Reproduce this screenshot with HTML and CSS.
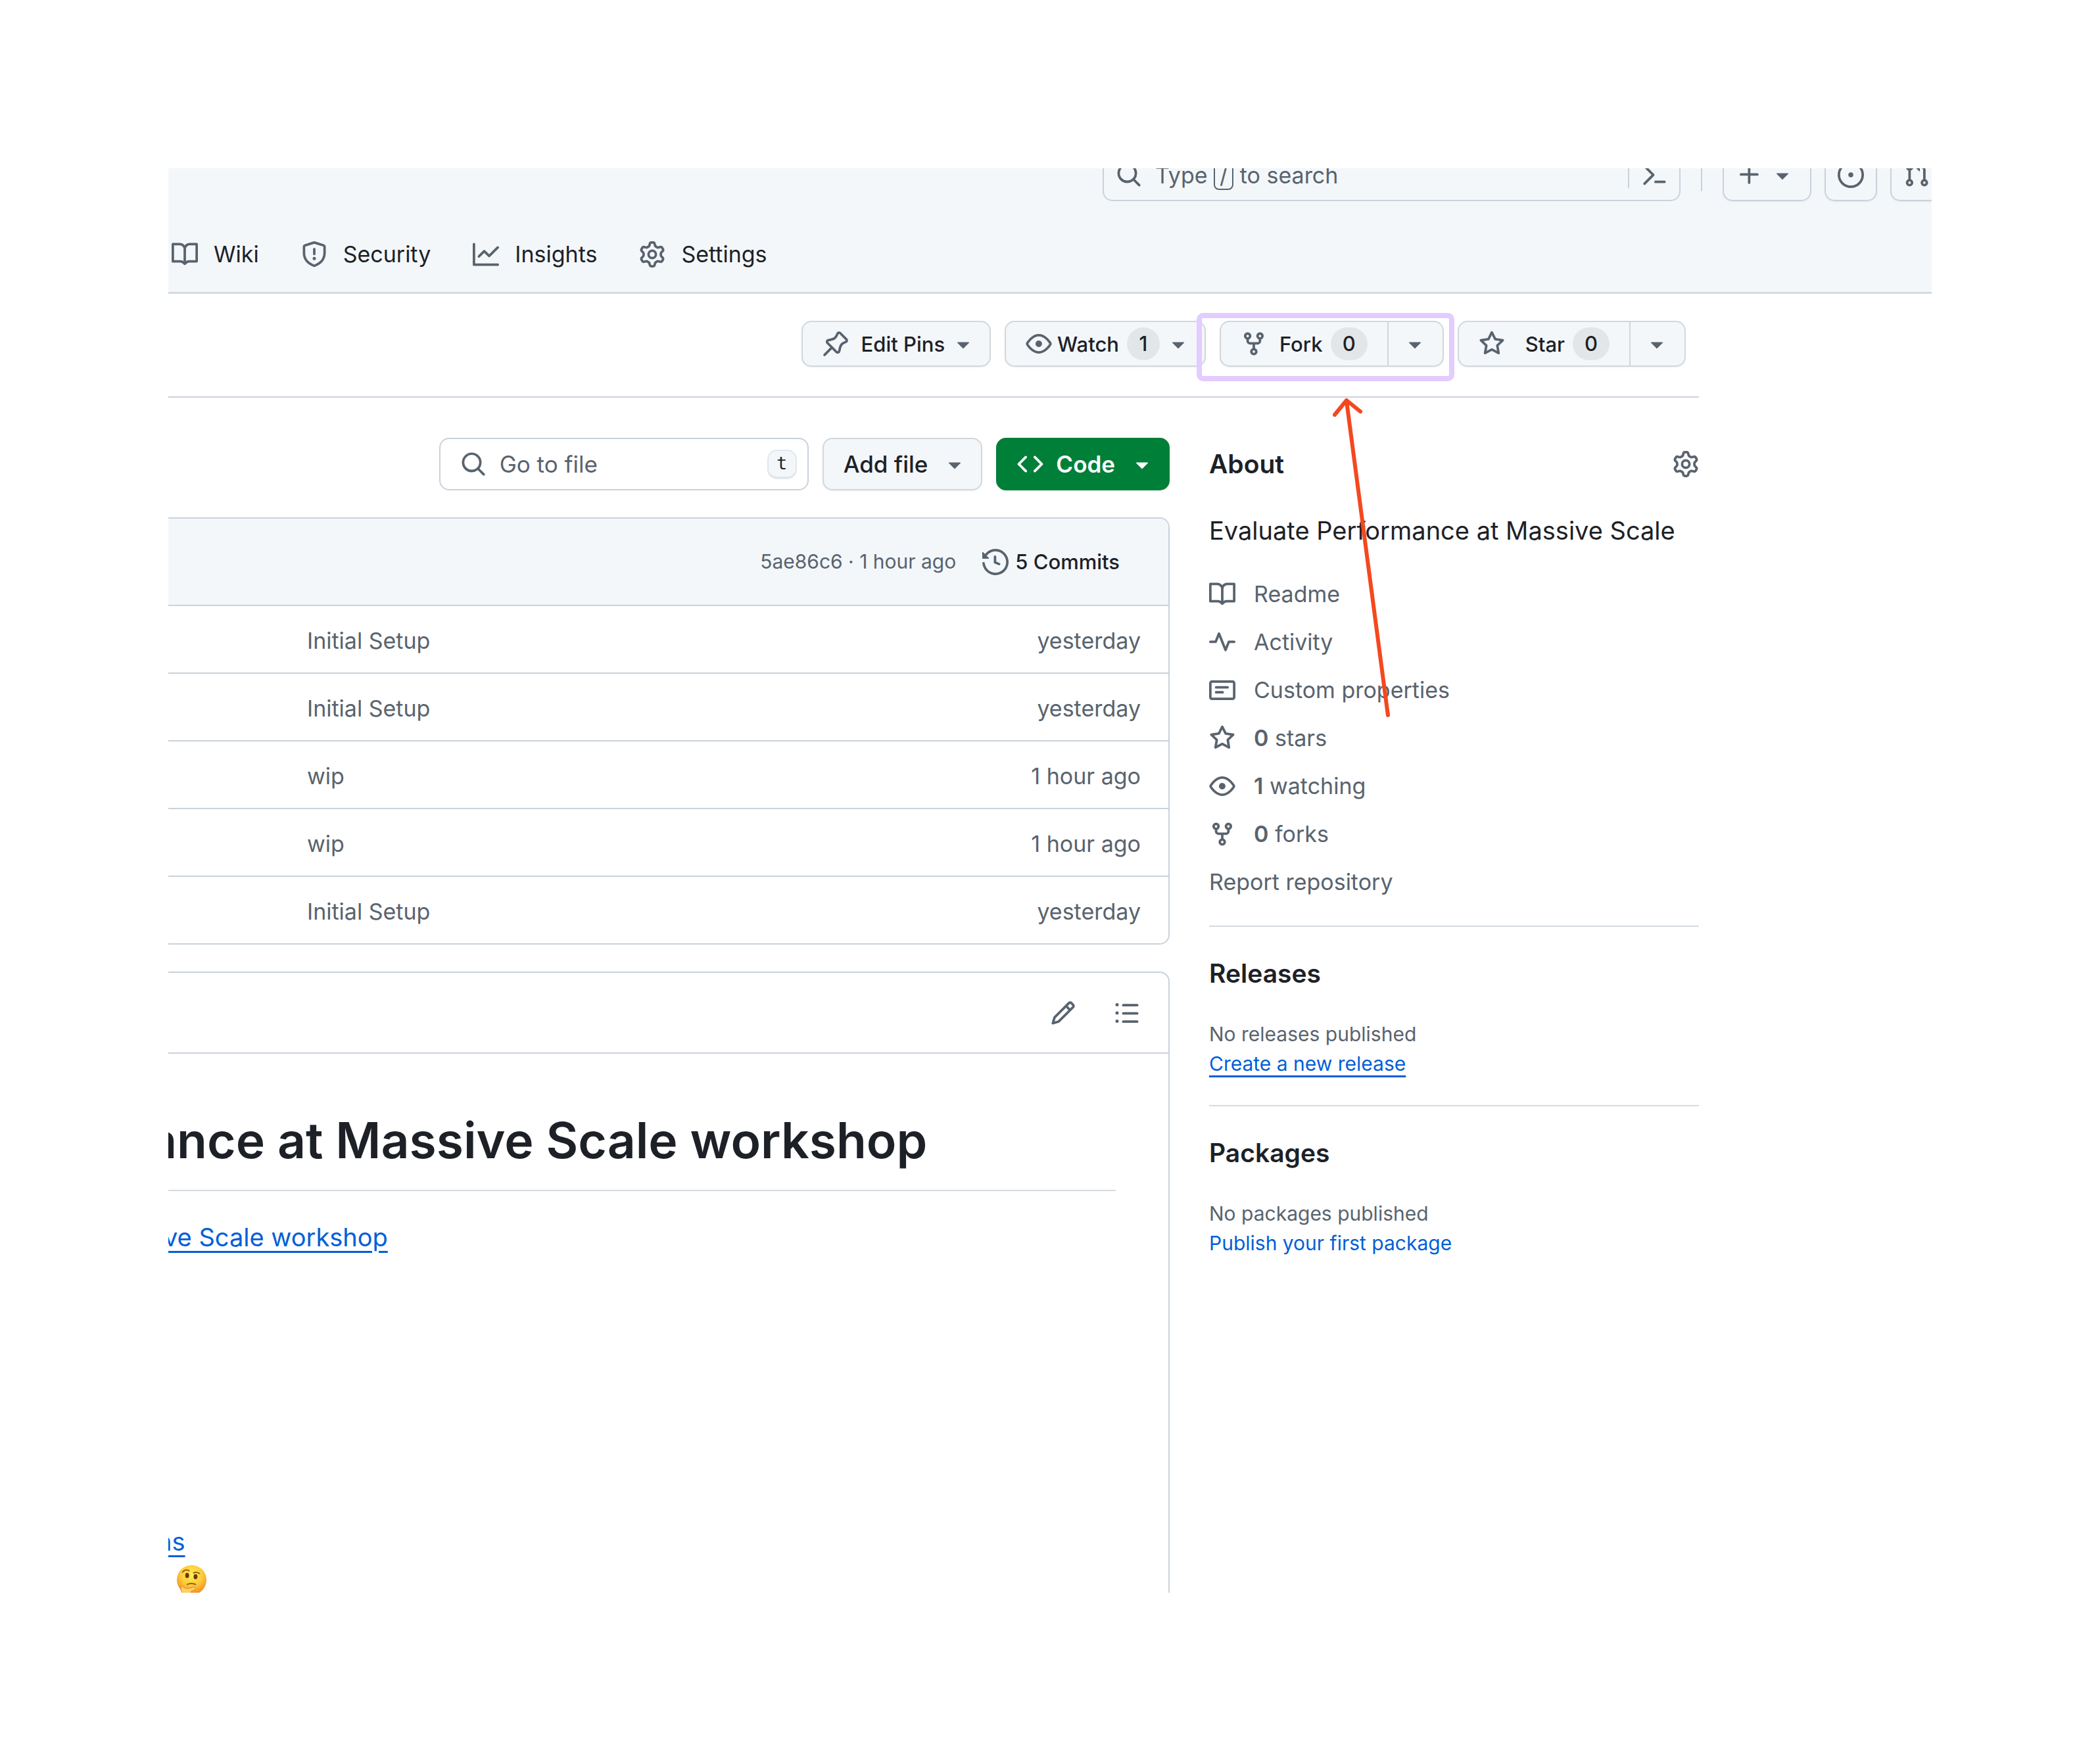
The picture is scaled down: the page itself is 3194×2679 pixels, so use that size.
FILE: index.html
```html
<!DOCTYPE html>
<html lang="en">
<head>
<meta charset="utf-8">
<title>Evaluate Performance at Massive Scale</title>
<link rel="stylesheet" href="styles.css">
</head>
<body>
<svg class="sprite" aria-hidden="true">
  <symbol id="search" viewBox="0 0 16 16"><path d="M10.68 11.74a6 6 0 0 1-7.922-8.982 6 6 0 0 1 8.982 7.922l3.04 3.04a.749.749 0 0 1-.326 1.275.749.749 0 0 1-.734-.215ZM11.5 7a4.499 4.499 0 1 0-8.997 0A4.499 4.499 0 0 0 11.5 7Z"/></symbol>
  <symbol id="book" viewBox="0 0 16 16"><path d="M0 1.75A.75.75 0 0 1 .75 1h4.253c1.227 0 2.317.59 3 1.501A3.743 3.743 0 0 1 11.006 1h4.245a.75.75 0 0 1 .75.75v10.5a.75.75 0 0 1-.75.75h-4.507a2.25 2.25 0 0 0-1.591.659l-.622.621a.75.75 0 0 1-1.06 0l-.622-.621A2.25 2.25 0 0 0 5.258 13H.75a.75.75 0 0 1-.75-.75Zm7.251 10.324.004-5.073-.002-2.253A2.25 2.25 0 0 0 5.003 2.5H1.5v9h3.757a3.75 3.75 0 0 1 1.994.574ZM8.755 4.75l-.004 7.322a3.752 3.752 0 0 1 1.992-.572H14.5v-9h-3.495a2.25 2.25 0 0 0-2.25 2.25Z"/></symbol>
  <symbol id="star" viewBox="0 0 16 16"><path d="M8 .25a.75.75 0 0 1 .673.418l1.882 3.815 4.21.612a.75.75 0 0 1 .416 1.279l-3.046 2.97.719 4.192a.751.751 0 0 1-1.088.791L8 12.347l-3.766 1.98a.75.75 0 0 1-1.088-.79l.72-4.194L.818 6.374a.75.75 0 0 1 .416-1.28l4.21-.611L7.327.668A.75.75 0 0 1 8 .25Zm0 2.445L6.615 5.5a.75.75 0 0 1-.564.41l-3.097.45 2.24 2.184a.75.75 0 0 1 .216.664l-.528 3.084 2.769-1.456a.75.75 0 0 1 .698 0l2.77 1.456-.53-3.084a.75.75 0 0 1 .216-.664l2.24-2.183-3.096-.45a.75.75 0 0 1-.564-.41L8 2.694Z"/></symbol>
  <symbol id="eye" viewBox="0 0 16 16"><path d="M8 2c1.981 0 3.671.992 4.933 2.078 1.27 1.091 2.187 2.345 2.637 3.023a1.62 1.62 0 0 1 0 1.798c-.45.678-1.367 1.932-2.637 3.023C11.67 13.008 9.981 14 8 14c-1.981 0-3.671-.992-4.933-2.078C1.797 10.83.88 9.576.43 8.898a1.62 1.62 0 0 1 0-1.798c.45-.677 1.367-1.931 2.637-3.022C4.33 2.992 6.019 2 8 2ZM1.679 7.932a.12.12 0 0 0 0 .136c.411.622 1.241 1.75 2.366 2.717C5.176 11.758 6.527 12.5 8 12.5c1.473 0 2.825-.742 3.955-1.715 1.124-.967 1.954-2.096 2.366-2.717a.12.12 0 0 0 0-.136c-.412-.621-1.242-1.75-2.366-2.717C10.824 4.242 9.473 3.5 8 3.5c-1.473 0-2.825.742-3.955 1.715-1.124.967-1.954 2.096-2.366 2.717ZM8 10a2 2 0 1 1-.001-3.999A2 2 0 0 1 8 10Z"/></symbol>
  <symbol id="fork" viewBox="0 0 16 16"><path d="M5 5.372v.878c0 .414.336.75.75.75h4.5a.75.75 0 0 0 .75-.75v-.878a2.25 2.25 0 1 1 1.5 0v.878a2.25 2.25 0 0 1-2.25 2.25h-1.5v2.128a2.251 2.251 0 1 1-1.5 0V8.5h-1.5A2.25 2.25 0 0 1 3.5 6.25v-.878a2.25 2.25 0 1 1 1.5 0ZM5 3.25a.75.75 0 1 0-1.5 0 .75.75 0 0 0 1.5 0Zm6.75.75a.75.75 0 1 0 0-1.5.75.75 0 0 0 0 1.5Zm-3 8.75a.75.75 0 1 0-1.5 0 .75.75 0 0 0 1.5 0Z"/></symbol>
  <symbol id="gear" viewBox="0 0 16 16"><path d="M8 0a8.2 8.2 0 0 1 .701.031C9.444.095 9.99.645 10.16 1.29l.288 1.107c.018.066.079.158.212.224.231.114.454.243.668.386.123.082.233.09.299.071l1.103-.303c.644-.176 1.392.021 1.82.63.27.385.506.792.704 1.218.315.675.111 1.422-.364 1.891l-.814.806c-.049.048-.098.147-.088.294.016.257.016.515 0 .772-.01.147.038.246.088.294l.814.806c.475.469.679 1.216.364 1.891a7.977 7.977 0 0 1-.704 1.217c-.428.61-1.176.807-1.82.63l-1.102-.302c-.067-.019-.177-.011-.3.071a5.909 5.909 0 0 1-.668.386c-.133.066-.194.158-.211.224l-.29 1.106c-.168.646-.715 1.196-1.458 1.26a8.006 8.006 0 0 1-1.402 0c-.743-.064-1.289-.614-1.458-1.26l-.289-1.106c-.018-.066-.079-.158-.212-.224a5.738 5.738 0 0 1-.668-.386c-.123-.082-.233-.09-.299-.071l-1.103.303c-.644.176-1.392-.021-1.82-.63a8.12 8.12 0 0 1-.704-1.218c-.315-.675-.111-1.422.363-1.891l.815-.806c.05-.048.098-.147.088-.294a6.214 6.214 0 0 1 0-.772c.01-.147-.038-.246-.088-.294l-.815-.806C.635 6.045.431 5.298.746 4.623a7.92 7.92 0 0 1 .704-1.217c.428-.61 1.176-.807 1.82-.63l1.102.302c.067.019.177.011.3-.071.214-.143.437-.272.668-.386.133-.066.194-.158.211-.224l.29-1.106C6.009.645 6.556.095 7.299.03 7.53.01 7.764 0 8 0Zm-.571 1.525c-.036.003-.108.036-.137.146l-.289 1.105c-.147.561-.549.967-.998 1.189-.173.086-.34.183-.5.29-.417.278-.97.423-1.529.27l-1.103-.303c-.109-.03-.175.016-.195.045-.22.312-.412.644-.573.99-.014.031-.021.11.059.19l.815.806c.411.406.562.957.53 1.456a4.709 4.709 0 0 0 0 .582c.032.499-.119 1.05-.53 1.456l-.815.806c-.081.08-.073.159-.059.19.162.346.353.677.573.989.02.03.085.076.195.046l1.102-.303c.56-.153 1.113-.008 1.53.27.161.107.328.204.501.29.447.222.85.629.997 1.189l.289 1.105c.029.109.101.143.137.146a6.6 6.6 0 0 0 1.142 0c.036-.003.108-.036.137-.146l.289-1.105c.147-.561.549-.967.998-1.189.173-.086.34-.183.5-.29.417-.278.97-.423 1.529-.27l1.103.303c.109.029.175-.016.195-.045.22-.313.411-.644.573-.99.014-.031.021-.11-.059-.19l-.815-.806c-.411-.406-.562-.957-.53-1.456a4.709 4.709 0 0 0 0-.582c-.032-.499.119-1.05.53-1.456l.815-.806c.081-.08.073-.159.059-.19a6.464 6.464 0 0 0-.573-.989c-.02-.03-.085-.076-.195-.046l-1.102.303c-.56.153-1.113.008-1.53-.27a4.44 4.44 0 0 0-.501-.29c-.447-.222-.85-.629-.997-1.189l-.289-1.105c-.029-.11-.101-.143-.137-.146a6.6 6.6 0 0 0-1.142 0ZM11 8a3 3 0 1 1-6 0 3 3 0 0 1 6 0ZM9.5 8a1.5 1.5 0 1 0-3.001.001A1.5 1.5 0 0 0 9.5 8Z"/></symbol>
  <symbol id="shield" viewBox="0 0 16 16"><path d="M7.467.133a1.748 1.748 0 0 1 1.066 0l5.25 1.68A1.75 1.75 0 0 1 15 3.48V7c0 1.566-.32 3.182-1.303 4.682-.983 1.498-2.585 2.813-5.032 3.855a1.697 1.697 0 0 1-1.33 0c-2.447-1.042-4.049-2.357-5.032-3.855C1.32 10.182 1 8.566 1 7V3.48a1.755 1.755 0 0 1 1.217-1.667Zm.61 1.429a.25.25 0 0 0-.153 0l-5.25 1.68a.25.25 0 0 0-.174.238V7c0 1.358.275 2.666 1.057 3.86.784 1.194 2.121 2.34 4.366 3.297a.196.196 0 0 0 .154 0c2.245-.956 3.582-2.104 4.366-3.298C13.225 9.666 13.5 8.36 13.5 7V3.48a.251.251 0 0 0-.174-.237l-5.25-1.68ZM8.75 4.75v3a.75.75 0 0 1-1.5 0v-3a.75.75 0 0 1 1.5 0ZM9 10.5a1 1 0 1 1-2 0 1 1 0 0 1 2 0Z"/></symbol>
  <symbol id="graph" viewBox="0 0 16 16"><path d="M1.5 1.75V13.5h13.75a.75.75 0 0 1 0 1.5H.75a.75.75 0 0 1-.75-.75V1.75a.75.75 0 0 1 1.5 0Zm14.28 2.53-5.25 5.25a.75.75 0 0 1-1.06 0L7 7.06 4.28 9.78a.751.751 0 0 1-1.042-.018.751.751 0 0 1-.018-1.042l3.25-3.25a.75.75 0 0 1 1.06 0L10 7.94l4.72-4.72a.751.751 0 0 1 1.042.018.751.751 0 0 1 .018 1.042Z"/></symbol>
  <symbol id="pulse" viewBox="0 0 16 16"><path d="M6 2c.306 0 .582.187.696.471L10 10.731l1.304-3.26A.751.751 0 0 1 12 7h3.25a.75.75 0 0 1 0 1.5h-2.742l-1.812 4.528a.751.751 0 0 1-1.392 0L6 4.77 4.696 8.03A.75.75 0 0 1 4 8.5H.75a.75.75 0 0 1 0-1.5h2.742l1.812-4.529A.751.751 0 0 1 6 2Z"/></symbol>
  <symbol id="note" viewBox="0 0 16 16"><path d="M0 3.75C0 2.784.784 2 1.75 2h12.5c.966 0 1.75.784 1.75 1.75v8.5A1.75 1.75 0 0 1 14.25 14H1.75A1.75 1.75 0 0 1 0 12.25Zm1.75-.25a.25.25 0 0 0-.25.25v8.5c0 .138.112.25.25.25h12.5a.25.25 0 0 0 .25-.25v-8.5a.25.25 0 0 0-.25-.25ZM3.5 6.25a.75.75 0 0 1 .75-.75h7a.75.75 0 0 1 0 1.5h-7a.75.75 0 0 1-.75-.75Zm.75 2.25h4a.75.75 0 0 1 0 1.5h-4a.75.75 0 0 1 0-1.5Z"/></symbol>
  <symbol id="code" viewBox="0 0 16 16"><path d="m11.28 3.22 4.25 4.25a.75.75 0 0 1 0 1.06l-4.25 4.25a.749.749 0 0 1-1.275-.326.749.749 0 0 1 .215-.734L13.94 8l-3.72-3.72a.749.749 0 0 1 .326-1.275.749.749 0 0 1 .734.215Zm-6.56 0a.751.751 0 0 1 1.042.018.751.751 0 0 1 .018 1.042L2.06 8l3.72 3.72a.749.749 0 0 1-.326 1.275.749.749 0 0 1-.734-.215L.47 8.53a.75.75 0 0 1 0-1.06Z"/></symbol>
  <symbol id="history" viewBox="0 0 16 16"><path d="m.427 1.927 1.215 1.215a8.002 8.002 0 1 1-1.6 5.685.75.75 0 1 1 1.493-.154 6.5 6.5 0 1 0 1.18-4.458l1.358 1.358A.25.25 0 0 1 3.896 6H.25A.25.25 0 0 1 0 5.75V2.104a.25.25 0 0 1 .427-.177ZM7.75 4a.75.75 0 0 1 .75.75v2.992l2.028.812a.75.75 0 0 1-.557 1.392l-2.5-1A.751.751 0 0 1 7 8.25v-3.5A.75.75 0 0 1 7.75 4Z"/></symbol>
  <symbol id="pencil" viewBox="0 0 16 16"><path d="M11.013 1.427a1.75 1.75 0 0 1 2.474 0l1.086 1.086a1.75 1.75 0 0 1 0 2.474l-8.61 8.61c-.21.21-.47.364-.756.445l-3.251.93a.75.75 0 0 1-.927-.928l.929-3.25c.081-.286.235-.547.445-.758l8.61-8.61Zm.176 4.823L9.75 4.81l-6.286 6.287a.253.253 0 0 0-.064.108l-.558 1.953 1.953-.558a.253.253 0 0 0 .108-.064Zm1.238-3.763a.25.25 0 0 0-.354 0L10.811 3.75l1.439 1.44 1.263-1.263a.25.25 0 0 0 0-.354Z"/></symbol>
  <symbol id="list" viewBox="0 0 16 16"><path d="M5.75 2.5h8.5a.75.75 0 0 1 0 1.5h-8.5a.75.75 0 0 1 0-1.5Zm0 5h8.5a.75.75 0 0 1 0 1.5h-8.5a.75.75 0 0 1 0-1.5Zm0 5h8.5a.75.75 0 0 1 0 1.5h-8.5a.75.75 0 0 1 0-1.5ZM2 14a1 1 0 1 1 0-2 1 1 0 0 1 0 2Zm1-6a1 1 0 1 1-2 0 1 1 0 0 1 2 0ZM2 4a1 1 0 1 1 0-2 1 1 0 0 1 0 2Z"/></symbol>
  <symbol id="pin" viewBox="0 0 16 16"><path d="m11.294.984 3.722 3.722a1.75 1.75 0 0 1-.504 2.826l-1.327.613a3.089 3.089 0 0 0-1.707 2.084l-.584 2.454c-.317 1.332-1.972 1.8-2.94.832L5.75 11.311 1.78 15.28a.749.749 0 1 1-1.06-1.06l3.969-3.97-2.204-2.204c-.968-.968-.5-2.623.832-2.94l2.454-.584a3.08 3.08 0 0 0 2.084-1.707l.613-1.327a1.75 1.75 0 0 1 2.826-.504ZM6.283 9.723l2.732 2.731a.25.25 0 0 0 .42-.119l.584-2.454a4.586 4.586 0 0 1 2.537-3.098l1.328-.613a.25.25 0 0 0 .072-.404l-3.722-3.722a.25.25 0 0 0-.404.072l-.613 1.328a4.584 4.584 0 0 1-3.098 2.537l-2.454.584a.25.25 0 0 0-.119.42l2.731 2.732Z"/></symbol>
  <symbol id="caret" viewBox="4 4 8 8"><path d="m4.427 7.427 3.396 3.396a.25.25 0 0 0 .354 0l3.396-3.396A.25.25 0 0 0 11.396 7H4.604a.25.25 0 0 0-.177.427Z"/></symbol>
  <symbol id="issue" viewBox="0 0 16 16"><path d="M8 9.5a1.5 1.5 0 1 0 0-3 1.5 1.5 0 0 0 0 3ZM8 0a8 8 0 1 1 0 16A8 8 0 0 1 8 0ZM1.5 8a6.5 6.5 0 1 0 13 0 6.5 6.5 0 0 0-13 0Z"/></symbol>
  <symbol id="plus" viewBox="0 0 16 16"><path d="M7.75 2a.75.75 0 0 1 .75.75V7h4.25a.75.75 0 0 1 0 1.5H8.5v4.25a.75.75 0 0 1-1.5 0V8.5H2.75a.75.75 0 0 1 0-1.5H7V2.75A.75.75 0 0 1 7.75 2Z"/></symbol>
  <symbol id="pull" viewBox="0 0 16 16"><path d="M1.5 3.25a2.25 2.25 0 1 1 3 2.122v5.256a2.251 2.251 0 1 1-1.5 0V5.372A2.25 2.25 0 0 1 1.5 3.25Zm5.677-.177L9.573.677A.25.25 0 0 1 10 .854V2.5h1A2.5 2.5 0 0 1 13.5 5v5.628a2.251 2.251 0 1 1-1.5 0V5a1 1 0 0 0-1-1h-1v1.646a.25.25 0 0 1-.427.177L7.177 3.427a.25.25 0 0 1 0-.354ZM3.75 2.5a.75.75 0 1 0 0 1.5.75.75 0 0 0 0-1.5Zm0 9.5a.75.75 0 1 0 0 1.5.75.75 0 0 0 0-1.5Zm8.25.75a.75.75 0 1 0 1.5 0 .75.75 0 0 0-1.5 0Z"/></symbol>
  <symbol id="command" viewBox="0 0 16 16"><path d="m6.354 8.04-4.773 4.773a.75.75 0 1 0 1.061 1.06L7.945 8.57a.75.75 0 0 0 0-1.06L2.642 2.206a.75.75 0 0 0-1.06 1.061L6.353 8.04ZM8.75 11.5a.75.75 0 0 0 0 1.5h5.5a.75.75 0 0 0 0-1.5h-5.5Z"/></symbol>
</svg>

<div class="frame">
  <header class="header">
    <div class="topbar">
      <div class="search">
        <button class="search-open"><svg class="icon"><use href="#search"/></svg><span class="search-hint">Type <kbd class="slash">/</kbd> to search</span></button>
        <button class="search-command" aria-label="Command palette"><svg class="icon"><use href="#command"/></svg></button>
      </div>
      <span class="divider"></span>
      <div class="topbar-buttons">
        <button class="square create" aria-label="Create new"><svg class="icon"><use href="#plus"/></svg><svg class="caret"><use href="#caret"/></svg></button>
        <a class="square" href="#" aria-label="Issues"><svg class="icon"><use href="#issue"/></svg></a>
        <a class="square" href="#" aria-label="Pull requests"><svg class="icon"><use href="#pull"/></svg></a>
      </div>
    </div>
    <nav class="tabs">
      <a class="tab" href="#"><svg class="icon"><use href="#book"/></svg><span>Wiki</span></a>
      <a class="tab" href="#"><svg class="icon"><use href="#shield"/></svg><span>Security</span></a>
      <a class="tab" href="#"><svg class="icon"><use href="#graph"/></svg><span>Insights</span></a>
      <a class="tab" href="#"><svg class="icon"><use href="#gear"/></svg><span>Settings</span></a>
    </nav>
  </header>

  <div class="content">
    <div class="actions">
      <button class="btn small"><svg class="icon"><use href="#pin"/></svg><span class="label-wide">Edit Pins</span><svg class="caret"><use href="#caret"/></svg></button>
      <button class="btn small"><svg class="icon"><use href="#eye"/></svg><span class="label-tight">Watch</span><span class="counter">1</span><svg class="caret"><use href="#caret"/></svg></button>
      <div class="split">
        <button class="btn small split-main"><svg class="icon"><use href="#fork"/></svg><span class="label-wide">Fork</span><span class="counter">0</span></button>
        <button class="btn small split-more" aria-label="See your forks"><svg class="caret"><use href="#caret"/></svg></button>
        <span class="highlight"></span>
        <svg class="arrow" viewBox="0 0 100 500" aria-hidden="true"><path d="M90 488 27 10M9 31 27 9 48 26"/></svg>
      </div>
      <div class="split">
        <button class="btn small split-main"><svg class="icon"><use href="#star"/></svg><span class="label-star">Star</span><span class="counter">0</span></button>
        <button class="btn small split-more" aria-label="Add to a list"><svg class="caret"><use href="#caret"/></svg></button>
      </div>
    </div>

    <div class="columns">
      <main class="main">
        <div class="toolbar">
          <label class="finder"><svg class="icon"><use href="#search"/></svg><input type="text" placeholder="Go to file" aria-label="Go to file"><kbd class="key">t</kbd></label>
          <button class="btn medium">Add file<svg class="caret"><use href="#caret"/></svg></button>
          <button class="btn medium primary"><svg class="icon"><use href="#code"/></svg><span class="label-wide">Code</span><svg class="caret"><use href="#caret"/></svg></button>
        </div>

        <section class="box files">
          <div class="commit">
            <span class="commit-meta"><a href="#">5ae86c6</a> · 1 hour ago</span>
            <a class="commit-count" href="#"><svg class="icon"><use href="#history"/></svg>5 Commits</a>
          </div>
          <table class="file-table">
            <tbody>
              <tr><td><a href="#">Initial Setup</a></td><td class="when">yesterday</td></tr>
              <tr><td><a href="#">Initial Setup</a></td><td class="when">yesterday</td></tr>
              <tr><td><a href="#">wip</a></td><td class="when">1 hour ago</td></tr>
              <tr><td><a href="#">wip</a></td><td class="when">1 hour ago</td></tr>
              <tr><td><a href="#">Initial Setup</a></td><td class="when">yesterday</td></tr>
            </tbody>
          </table>
        </section>

        <section class="box readme">
          <div class="readme-bar">
            <button class="plain" aria-label="Edit file"><svg class="icon"><use href="#pencil"/></svg></button>
            <button class="plain" aria-label="Outline"><svg class="icon"><use href="#list"/></svg></button>
          </div>
          <article class="readme-body">
            <h1 class="title"><span>ance at Massive Scale workshop</span></h1>
            <p class="intro"><a href="#">ve Scale workshop</a></p>
            <p class="more"><a href="#">ns</a></p>
            <p class="thinking">
              <svg class="emoji" viewBox="0 0 48 48" role="img" aria-label="Thinking face">
                <defs><radialGradient id="face" cx=".5" cy=".32" r=".68"><stop offset="0" stop-color="#fff04e"/><stop offset=".55" stop-color="#fcc93a"/><stop offset="1" stop-color="#f08a1d"/></radialGradient></defs>
                <circle cx="24" cy="24" r="23" fill="url(#face)"/>
                <ellipse cx="17" cy="17" rx="3" ry="4" fill="#6b3410"/><ellipse cx="30" cy="19" rx="3" ry="4" fill="#6b3410"/>
                <path d="M10 12c3-4 7-4 10-2M27 13c3-1 6-1 9 1M17 31c4-2 8-2 13 0" fill="none" stroke="#9a5a17" stroke-width="2" stroke-linecap="round"/>
                <path d="M8 33c4 3 6 5 11 4l9-2c3 0 2 4-1 5l-4 2c0 5-5 6-9 6-5-2-8-8-6-15Z" fill="#ffd264" stroke="#e0842a" stroke-width="1"/>
              </svg>
            </p>
          </article>
        </section>
      </main>

      <aside class="sidebar">
        <section class="panel">
          <div class="about-head"><h2>About</h2><button class="plain" aria-label="Edit repository details"><svg class="icon"><use href="#gear"/></svg></button></div>
          <p class="description">Evaluate Performance at Massive Scale</p>
          <ul class="facts">
            <li><a href="#"><svg class="icon"><use href="#book"/></svg><span>Readme</span></a></li>
            <li><a href="#"><svg class="icon"><use href="#pulse"/></svg><span>Activity</span></a></li>
            <li><a href="#"><svg class="icon"><use href="#note"/></svg><span>Custom properties</span></a></li>
            <li><a href="#"><svg class="icon"><use href="#star"/></svg><span><strong>0</strong> stars</span></a></li>
            <li><a href="#"><svg class="icon"><use href="#eye"/></svg><span><strong>1</strong> watching</span></a></li>
            <li><a href="#"><svg class="icon"><use href="#fork"/></svg><span><strong>0</strong> forks</span></a></li>
            <li><a href="#">Report repository</a></li>
          </ul>
        </section>
        <section class="panel">
          <h2>Releases</h2>
          <p class="note">No releases published</p>
          <p class="note"><a class="underlined" href="#">Create a new release</a></p>
        </section>
        <section class="panel">
          <h2>Packages</h2>
          <p class="note">No packages published</p>
          <p class="note"><a href="#">Publish your first package</a></p>
        </section>
      </aside>
    </div>
  </div>
</div>
</body>
</html>
```
FILE: styles.css
```css
:root {
  --text: #1d2127;
  --muted: #59636e;
  --link: #005fd7;
  --border: #c9d2db;
  --border-soft: #d4dbe1;
  --surface: #f3f7fa;
  --green: #007f38;
}

* { box-sizing: border-box; }

body {
  margin: 0;
  padding: 256px;
  background: #fff;
  color: var(--text);
  font: 34px/53px Inter, "Liberation Sans", sans-serif;
}

h1, h2, p, ul { margin: 0; padding: 0; }
ul { list-style: none; }
a { color: inherit; text-decoration: none; }
button, input { font: inherit; color: inherit; }
button { border: 0; background: none; padding: 0; }

.sprite { display: none; }
.icon { flex: none; display: block; width: 40px; height: 40px; fill: var(--muted); }
.caret { flex: none; display: block; width: 20px; height: 20px; fill: var(--muted); }

.frame { height: calc(100vh - 512px); overflow: hidden; }

/* Header, scrolled a little past its top */
.header { background: var(--surface); border-bottom: 3px solid var(--border-soft); }
.topbar { display: flex; justify-content: flex-end; align-items: center; margin: -30px -17px 0 0; }
.search { display: flex; align-items: center; width: 879px; height: 80px; border: 2px solid var(--border); border-radius: 15px; }
.search-open { flex: 1; display: flex; align-items: center; gap: 20px; padding-left: 18px; color: var(--muted); }
.slash { display: inline-block; width: 30px; height: 43px; border: 2px solid var(--muted); border-radius: 8px; font: inherit; line-height: 38px; text-align: center; }
.search-command { width: 78px; height: 40px; padding-left: 18px; border-left: 2px solid var(--border); }
.divider { width: 2px; height: 50px; margin: 0 31px; background: var(--border); }
.topbar-buttons { display: flex; gap: 20px; }
.square { display: flex; align-items: center; justify-content: center; width: 80px; height: 80px; border: 2px solid var(--border); border-radius: 15px; box-shadow: 0 2px 2px rgba(31, 35, 40, .04); }
.create { width: 135px; gap: 20px; padding-right: 14px; }
.tabs { display: flex; align-items: center; gap: 64px; padding: 54px 0 31px 5px; }
.tab { display: flex; align-items: center; gap: 24px; }

/* Buttons */
.btn { display: flex; align-items: center; padding: 0 30px; border: 2px solid #d2d7db; border-radius: 15px; background: var(--surface); box-shadow: 0 2px 2px rgba(31, 35, 40, .04); font-weight: 500; white-space: nowrap; }
.small { height: 70px; font-size: 31px; }
.small > .caret { margin-left: 18px; }
.medium { height: 80px; font-size: 35px; }
.medium > .caret { margin-left: 31px; }
.primary { border-color: var(--green); background: var(--green); color: #fff; font-weight: 600; }
.primary .icon, .primary .caret { fill: #fff; }
.label-wide { margin-left: 19px; }
.label-tight { margin-left: 8px; }
.label-star { margin-left: 31px; }
.counter { min-width: 50px; height: 50px; margin-left: 12px; padding: 0 18px; border-radius: 25px; background: #e2e6e9; line-height: 50px; text-align: center; }
.split { position: relative; display: flex; }
.split-main { border-radius: 15px 0 0 15px; }
.split-more { width: 84px; border-left: 0; border-radius: 0 15px 15px 0; }
.split-more > .caret { margin-left: 0; }
.highlight { position: absolute; inset: -12px -16px -22px -35px; border: 8px solid #e3ccff; border-radius: 10px; }
.arrow { position: absolute; left: 166px; top: 112px; width: 100px; height: 500px; fill: none; stroke: #f4481e; stroke-width: 6; stroke-linecap: round; stroke-linejoin: round; }

.content { padding-right: 354px; }
.actions { display: flex; justify-content: flex-end; gap: 21px; padding: 41px 20px 45px 0; border-bottom: 2px solid var(--border); }
.columns { display: grid; grid-template-columns: minmax(0, 1fr) 745px; gap: 60px; padding-top: 61px; }

/* File list */
.toolbar { display: flex; justify-content: flex-end; gap: 21px; }
.finder { display: flex; align-items: center; width: 562px; height: 80px; padding: 0 16px 0 30px; border: 2px solid var(--border); border-radius: 15px; font-size: 35px; }
.finder input { flex: 1; min-width: 0; margin-left: 20px; padding: 0; border: 0; background: none; outline: 0; }
.finder input::placeholder { color: var(--muted); opacity: 1; }
.key { width: 45px; height: 45px; border: 2px solid #e2e7eb; border-bottom-width: 4px; border-radius: 15px; background: var(--surface); font: 27px/37px "DejaVu Sans Mono", monospace; text-align: center; }
.box { border: 2px solid var(--border); border-left: 0; border-radius: 0 15px 15px 0; }
.files { margin-top: 41px; overflow: hidden; }
.commit { display: flex; align-items: center; justify-content: flex-end; gap: 40px; height: 131px; padding-right: 74px; background: var(--surface); }
.commit-meta { color: var(--muted); font-size: 30px; }
.commit-count { display: flex; align-items: center; gap: 10px; font-size: 31px; font-weight: 500; }
.file-table { width: 100%; border-collapse: separate; border-spacing: 0; color: var(--muted); }
.file-table td { height: 103px; padding: 4px 0 0 211px; border-top: 2px solid var(--border); }
.file-table .when { padding: 4px 42px 0 0; text-align: right; }

/* Readme */
.readme { margin-top: 41px; border-bottom: 0; border-bottom-right-radius: 0; }
.readme-bar { display: flex; align-items: center; justify-content: flex-end; gap: 57px; height: 123px; padding-right: 43px; border-bottom: 2px solid var(--border); }
.readme-body { height: 900px; padding: 82px 80px 0 0; overflow: hidden; font-size: 38px; line-height: 60px; white-space: nowrap; }
.readme-body a { color: var(--link); text-decoration: underline; text-decoration-thickness: 3px; text-underline-offset: 7px; }
.title { padding-bottom: 25px; border-bottom: 2px solid var(--border-soft); font-size: 75px; line-height: 100px; font-weight: 600; }
.title span { margin-left: -30px; }
.intro { margin-top: 40px; }
.intro a { margin-left: -7px; }
.more { margin-top: 403px; }
.more a { margin-left: -17px; }
.thinking { padding: 5px 0 0 12px; }
.emoji { display: block; width: 47px; height: 47px; }

/* Sidebar */
.panel { padding-bottom: 40px; }
.panel + .panel { padding-top: 46px; border-top: 2px solid var(--border-soft); }
.panel h2 { margin-bottom: 45px; font-size: 39px; line-height: 50px; font-weight: 600; }
.about-head { display: flex; align-items: center; justify-content: space-between; height: 80px; }
.about-head h2 { margin: 0; }
.description { margin: 31px 0 40px; font-size: 38px; line-height: 60px; }
.facts { display: grid; gap: 20px; color: var(--muted); }
.facts a { display: flex; align-items: center; gap: 28px; }
.facts strong { font-weight: 600; }
.note { color: var(--muted); font-size: 30px; line-height: 45px; }
.note a { color: var(--link); }
.underlined { text-decoration: underline; text-decoration-thickness: 3px; text-underline-offset: 7px; }
```
